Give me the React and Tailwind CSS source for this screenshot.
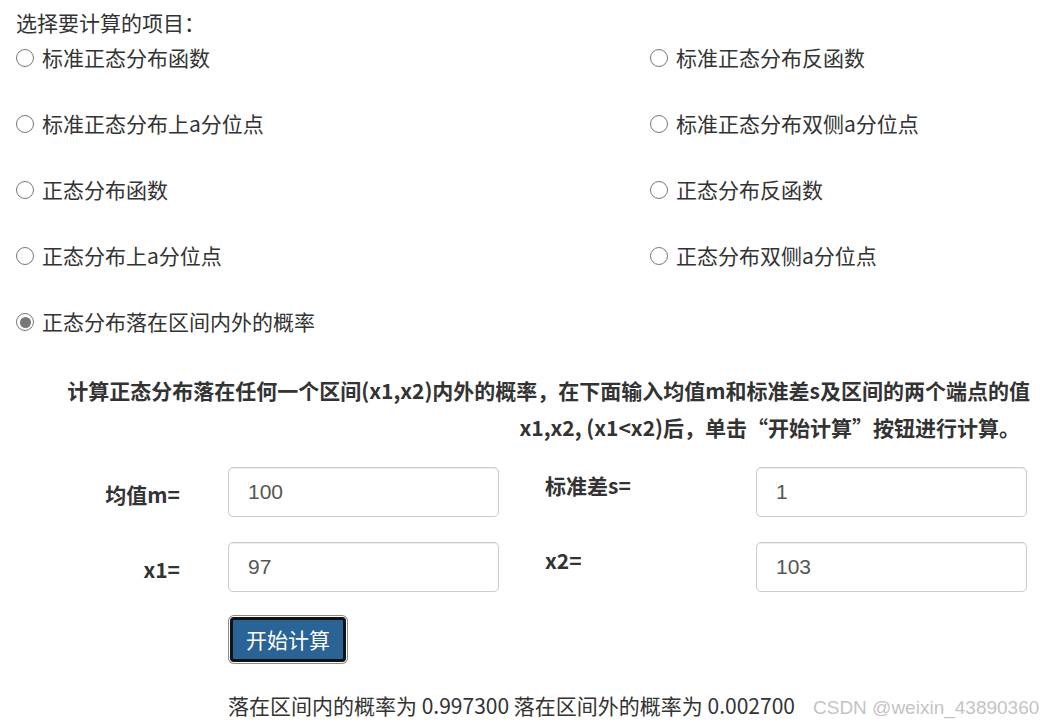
import { useState } from 'react';

const options = [
  ['标准正态分布函数', '标准正态分布反函数'],
  ['标准正态分布上a分位点', '标准正态分布双侧a分位点'],
  ['正态分布函数', '正态分布反函数'],
  ['正态分布上a分位点', '正态分布双侧a分位点'],
  ['正态分布落在区间内外的概率', null],
];

function Radio({ label, checked, onSelect }) {
  return (
    <label className="flex items-center h-[36px] cursor-pointer" onClick={onSelect}>
      <span className="shrink-0 w-[18px] h-[18px] rounded-full border-[1.5px] border-[#777] bg-white flex items-center justify-center mr-[8px]">
        {checked && <span className="w-[11px] h-[11px] rounded-full bg-[#777]" />}
      </span>
      <span>{label}</span>
    </label>
  );
}

function Field({ value }) {
  return (
    <input
      defaultValue={value}
      className="w-[271px] h-[50px] rounded-[5px] border border-[#cccccc] bg-white pl-[19px] text-[21px] text-[#555] shadow-[inset_0_1px_1px_rgba(0,0,0,0.075)] outline-none"
      style={{ fontFamily: '"Liberation Sans", Arial, sans-serif' }}
    />
  );
}

export default function App() {
  const [selected, setSelected] = useState('正态分布落在区间内外的概率');

  return (
    <div
      className="w-[1060px] h-[728px] bg-white text-[#333] text-[21px] relative overflow-hidden"
      style={{ fontFamily: '"Noto Sans CJK SC", "Noto Sans", sans-serif' }}
    >
      <div className="px-4 pt-[4px]">
        <div className="h-[36px] leading-[36px]">选择要计算的项目：</div>
        {options.map((row, i) => (
          <div key={i} className="grid grid-cols-[634px_1fr] h-[66px] items-start">
            <Radio label={row[0]} checked={selected === row[0]} onSelect={() => setSelected(row[0])} />
            {row[1] ? (
              <Radio label={row[1]} checked={selected === row[1]} onSelect={() => setSelected(row[1])} />
            ) : (
              <div />
            )}
          </div>
        ))}
      </div>

      <div className="pr-[30px] pt-[2px] text-right font-bold leading-[37px] text-[21px] whitespace-nowrap">
        <div>计算正态分布落在任何一个区间(x1,x2)内外的概率，在下面输入均值m和标准差s及区间的两个端点的值</div>
        <div className="pr-[10px]">x1,x2, (x1&lt;x2)后，单击“开始计算”按钮进行计算。</div>
      </div>

      <div className="mt-[21px] pl-4 flex flex-col gap-[25px]">
        <div className="flex items-start h-[50px]">
          <div className="w-[164px] text-right font-bold leading-[30px] pt-[12px]">均值m=</div>
          <div className="ml-[48px]"><Field value="100" /></div>
          <div className="w-[211px] ml-[46px] font-bold leading-[30px] pt-[3px]">标准差s=</div>
          <Field value="1" />
        </div>
        <div className="flex items-start h-[50px]">
          <div className="w-[164px] text-right font-bold leading-[30px] pt-[12px]">x1=</div>
          <div className="ml-[48px]"><Field value="97" /></div>
          <div className="w-[211px] ml-[46px] font-bold leading-[30px] pt-[3px]">x2=</div>
          <Field value="103" />
        </div>
      </div>

      <div className="pl-[230px] mt-[25px]">
        <button className="w-[116px] h-[45px] rounded-[4px] bg-[#2a6395] border-[3px] border-[#111] text-white text-[21px] leading-none shadow-[0_0_0_1px_#ffffff,0_0_0_2px_#8a8a8a]">
          开始计算
        </button>
      </div>

      <div className="pl-[228px] mt-[28px] leading-[30px] whitespace-nowrap">
        落在区间内的概率为 0.997300 落在区间外的概率为 0.002700
      </div>

      <div
        className="absolute left-[813px] top-[694px] text-[19px] leading-[28px] text-[#c4c4c4] whitespace-nowrap"
        style={{ fontFamily: '"Liberation Sans", Arial, sans-serif', textShadow: '0 0 1px #fff' }}
      >
        CSDN @weixin_43890360
      </div>
    </div>
  );
}
